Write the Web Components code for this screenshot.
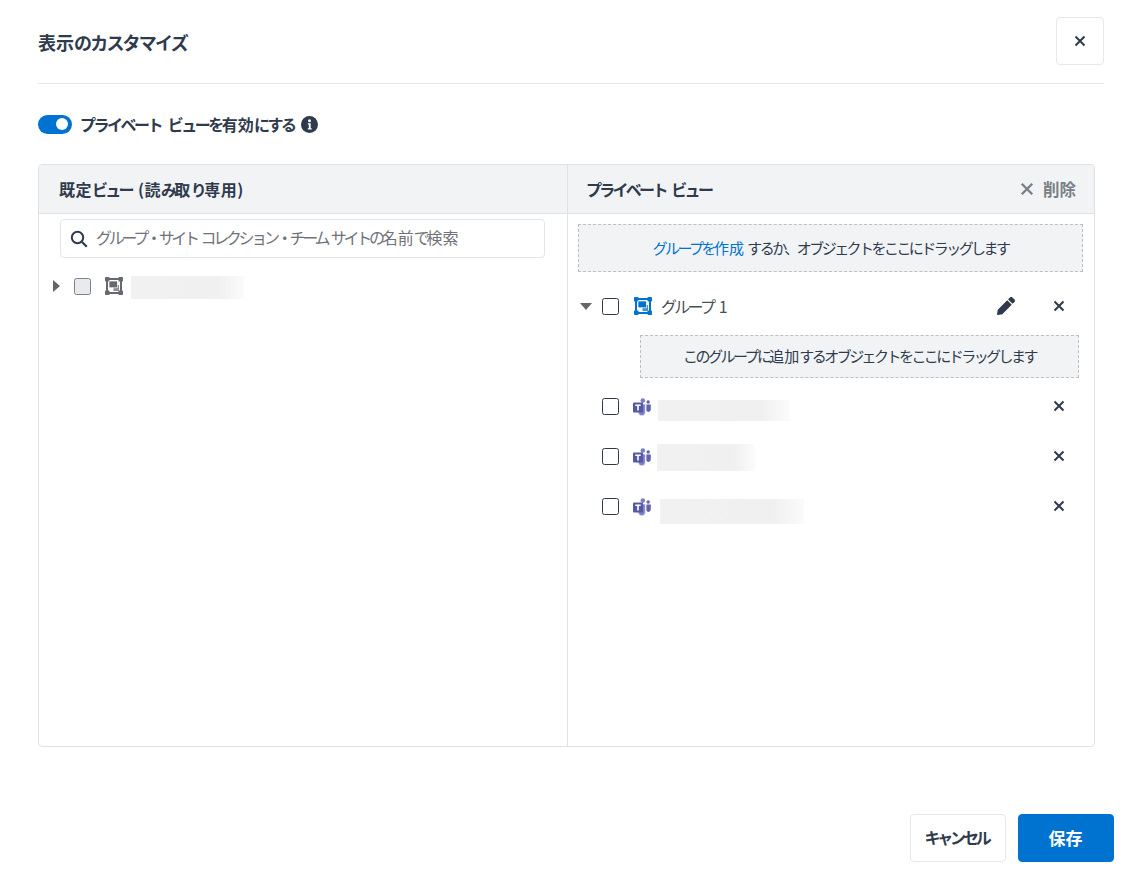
<!DOCTYPE html>
<html lang="ja">
<head>
<meta charset="utf-8">
<title>表示のカスタマイズ</title>
<style>
    html, body { margin: 0; background: #fff; }
    body {
        font-family: "Noto Sans CJK JP", "Noto Sans", sans-serif;
        color: #2f3b4c;
    }
    /* kana in the reference are proportional, so squeeze those runs only */
    .k { letter-spacing: -.17em; }
</style>
</head>
<body>
<customize-dialog heading="表示のカスタマイズ">
    <view-toggle slot="toggle" label="プライベート ビューを有効にする"></view-toggle>

    <view-pane slot="left" heading="既定ビュー (読み取り専用)" class="left">
        <search-box placeholder="グループ・サイト コレクション・チーム サイトの名前で検索"></search-box>
        <tree-row kind="left" caret="right" disabled icon="group-grey" blur="113,23,0,1"></tree-row>
    </view-pane>

    <view-pane slot="right" heading="プライベート ビュー" action="削除">
        <drop-zone main><a>グループを作成</a> するか、オブジェクトをここにドラッグします</drop-zone>
        <tree-row caret="down" icon="group-blue" label="グループ 1" edit remove></tree-row>
        <drop-zone nested>このグループに追加するオブジェクトをここにドラッグします</drop-zone>
        <tree-row kind="team" icon="teams" blur="132,21,0,4.5" remove></tree-row>
        <tree-row kind="team" icon="teams" blur="98,27,-1,1.5" remove></tree-row>
        <tree-row kind="team" icon="teams" blur="144,25,2,5.5" remove></tree-row>
    </view-pane>

    <dialog-button slot="footer">キャンセル</dialog-button>
    <dialog-button slot="footer" primary>保存</dialog-button>
</customize-dialog>

<script>
const KANA_CSS = `.k { letter-spacing: var(--k, -.17em); }`;
const kana = (text) => text.replace(/[ぁ-ゖァ-ヶー・、]+/g, (run) => `<span class="k">${run}</span>`);

const ICONS = {
    close: `<svg viewBox="0 0 12 12" width="12" height="12"><path d="M1.5 1.5l9 9M10.5 1.5l-9 9" stroke="currentColor" stroke-width="2" fill="none"/></svg>`,
    pencil: `<svg viewBox="0 0 512 512" width="18" height="18"><path fill="currentColor" d="M497.9 142.1l-46.1 46.1c-4.7 4.7-12.3 4.7-17 0l-111-111c-4.7-4.7-4.7-12.3 0-17l46.1-46.1c18.7-18.7 49.1-18.7 67.9 0l60.1 60.1c18.8 18.7 18.8 49.1 0 67.9zM284.2 99.8L21.6 362.4.4 483.9c-2.9 16.4 11.4 30.6 27.8 27.8l121.5-21.3 262.6-262.6c4.7-4.7 4.7-12.3 0-17l-111-111c-4.8-4.7-12.4-4.7-17.1 0z"/></svg>`,
    search: `<svg viewBox="0 0 18 18" width="18" height="18"><circle cx="7.5" cy="7.5" r="5.7" stroke="currentColor" stroke-width="2" fill="none"/><path d="M11.8 11.8l5 5" stroke="currentColor" stroke-width="2.2" fill="none"/></svg>`,
    info: `<svg viewBox="0 0 17 17" width="17" height="17"><circle cx="8.5" cy="8.5" r="8.5" fill="currentColor"/><circle cx="8.5" cy="4.8" r="1.5" fill="#fff"/><path d="M6.8 7.2h2.9v5h1v1.3H6.8v-1.3h1v-3.7h-1z" fill="#fff"/></svg>`,
    teams: `<svg viewBox="0 0 18 18" width="18" height="18">
        <circle cx="9.8" cy="2.6" r="2.3" fill="#7b7fc4"/><circle cx="15.2" cy="4" r="1.7" fill="#6264a7"/>
        <path d="M13.4 6.400h4.400v5.200a2.400 2.400 0 0 1-4.400 1.200z" fill="#6264a7"/>
        <path d="M5 6h7.300v8a3.500 3.500 0 0 1-7 .5z" fill="#7b7fc4" stroke="#fff" stroke-width=".6"/>
        <rect x="0" y="4.400" width="10" height="10" rx="1" fill="#5558a5"/>
        <path d="M2.300 6.600h5.400v1.500H5.800v4.400H4.200V8.100H2.300z" fill="#fff"/>
    </svg>`,
};

function groupIcon(colour, inner) {
    return `<svg viewBox="0 0 18 18" width="18" height="18">
        <rect x="2" y="2" width="14" height="14" fill="none" stroke="${colour}" stroke-width="2"/>
        <rect x="0" y="0" width="4.500" height="4.500" rx=".8" fill="${colour}"/><rect x="13.500" y="0" width="4.500" height="4.500" rx=".8" fill="${colour}"/>
        <rect x="0" y="13.500" width="4.500" height="4.500" rx=".8" fill="${colour}"/><rect x="13.500" y="13.500" width="4.500" height="4.500" rx=".8" fill="${colour}"/>
        <rect x="8.500" y="8" width="5.500" height="6" fill="${inner}"/>
        <rect x="4" y="4" width="8.500" height="6.800" fill="${colour}" stroke="#fff" stroke-width=".7"/>
    </svg>`;
}
ICONS["group-blue"] = groupIcon("#0072d0", "#3d94dc");
ICONS["group-grey"] = groupIcon("#66696e", "#8b8e92");

class CustomizeDialog extends HTMLElement {
    constructor() {
        super();
        const shadow = this.attachShadow({ mode: "open" });
        shadow.innerHTML = `
            <style>
                ${KANA_CSS}
                :host { display: block; width: 1136px; height: 875px; box-sizing: border-box; position: relative; }
                header {
                    display: flex; align-items: center; justify-content: space-between;
                    margin: 0 32px 0 38px; padding: 17px 0 18px; height: 84px; box-sizing: border-box;
                    border-bottom: 1px solid #e6e8ea;
                }
                h1 { margin: 2px 0 0; font-size: 18px; font-weight: 700; color: #2f3b4c; --k: -.1em; }
                button {
                    all: unset; width: 48px; height: 48px; box-sizing: border-box; border: 1px solid #e6e8ea;
                    border-radius: 4px; display: flex; align-items: center; justify-content: center; color: #2f3b4c;
                }
                .toggle { margin: 30px 0 0 38px; height: 20px; display: flex; align-items: center; }
                .panes {
                    display: grid; grid-template-columns: 529px 1fr; margin: 30px 41px 0 38px; height: 583px;
                    box-sizing: border-box; border: 1px solid #dfe2e5; border-radius: 4px; overflow: hidden;
                }
                footer { display: flex; justify-content: flex-end; gap: 12px; margin: 67px 22px 0 0; }
            </style>
            <header><h1>${kana(this.getAttribute("heading"))}</h1><button aria-label="閉じる">${ICONS.close}</button></header>
            <div class="toggle"><slot name="toggle"></slot></div>
            <div class="panes"><slot name="left"></slot><slot name="right"></slot></div>
            <footer><slot name="footer"></slot></footer>`;
    }
}

class ViewToggle extends HTMLElement {
    constructor() {
        super();
        const shadow = this.attachShadow({ mode: "open" });
        shadow.innerHTML = `
            <style>
                ${KANA_CSS}
                :host { display: flex; align-items: center; --k: -.155em; }
                .track { width: 34px; height: 19px; border-radius: 10px; background: #0072d0; position: relative; }
                .knob { position: absolute; right: 4px; top: 3.500px; width: 12px; height: 12px; border-radius: 50%; background: #fff; }
                .label { margin-left: 8px; font-size: 16px; font-weight: 700; word-spacing: 3px; color: #2f3b4c; }
                .info { margin-left: 6px; display: flex; color: #2f3b4c; }
            </style>
            <div class="track"><div class="knob"></div></div>
            <span class="label">${kana(this.getAttribute("label"))}</span>
            <span class="info">${ICONS.info}</span>`;
    }
}

class ViewPane extends HTMLElement {
    constructor() {
        super();
        const shadow = this.attachShadow({ mode: "open" });
        const action = this.getAttribute("action");
        shadow.innerHTML = `
            <style>
                ${KANA_CSS}
                :host { display: block; height: 100%; box-sizing: border-box; }
                :host(.left) { border-right: 1px solid #dfe2e5; }
                .head {
                    height: 49px; box-sizing: border-box; background: #f1f3f5; border-bottom: 1px solid #dfe2e5;
                    display: flex; align-items: center; justify-content: space-between; padding: 0 18px 0 18px;
                }
                :host(.left) .head { padding-left: 20px; }
                h2 { margin: 0; font-size: 16px; font-weight: 700; word-spacing: 2px; color: #2f3b4c; }
                :host(.left) h2 { letter-spacing: .5px; }
                .action { display: flex; align-items: center; gap: 9px; font-size: 16.5px; font-weight: 700; color: #7a7f85; }
                .action svg { width: 14px; height: 14px; display: block; }
            </style>
            <div class="head"><h2>${kana(this.getAttribute("heading"))}</h2>${action ? `<span class="action">${ICONS.close}<span>${action}</span></span>` : ""}</div>
            <slot></slot>`;
    }
}

class SearchBox extends HTMLElement {
    constructor() {
        super();
        const shadow = this.attachShadow({ mode: "open" });
        shadow.innerHTML = `
            <style>
                ${KANA_CSS}
                :host {
                    display: flex; align-items: center; margin: 5px 22px 0 21px; height: 39px; box-sizing: border-box;
                    border: 1px solid #e3e5e8; border-radius: 4px; padding-left: 9px; --k: -.205em;
                }
                .icon { display: flex; color: #2f3b4c; }
                span.text { margin: 0 0 3px 8px; font-size: 16px; color: #6f747a; white-space: nowrap; }
            </style>
            <div class="icon">${ICONS.search}</div><span class="text">${kana(this.getAttribute("placeholder"))}</span>`;
    }
}

class TreeRow extends HTMLElement {
    constructor() {
        super();
        const shadow = this.attachShadow({ mode: "open" });
        const caret = this.getAttribute("caret");
        const kind = this.getAttribute("kind") || "group";
        const disabled = this.hasAttribute("disabled");
        const label = this.getAttribute("label");
        const [bw, bh, bx, by] = (this.getAttribute("blur") || "").split(",");
        const caretSvg = caret === "down"
            ? `<svg viewBox="0 0 12 7" width="12" height="7"><path d="M0 0h12L6 7z" fill="#62666b"/></svg>`
            : `<svg viewBox="0 0 7 12" width="7" height="12"><path d="M0 0l7 6-7 6z" fill="#62666b"/></svg>`;
        shadow.innerHTML = `
            <style>
                ${KANA_CSS}
                :host { display: flex; align-items: center; height: 50px; position: relative; padding-left: 12px; }
                :host([kind="left"]) { padding-left: 14px; margin-top: 3px; }
                :host([kind="team"]) { padding-left: 34px; }
                .caret { width: 12px; display: flex; justify-content: center; margin-right: 10px; }
                :host([kind="left"]) .caret { width: 7px; margin-right: 14px; }
                .check {
                    width: 17px; height: 17px; box-sizing: border-box; border: 1.500px solid #2f3b4c; border-radius: 2.500px; flex: none;
                }
                .check.off { background: #e8eaed; border-color: #7d8287; }
                .icon { display: flex; margin-left: 15px; margin-right: 9px; }
                :host([kind="left"]) .icon { margin-left: 14px; margin-right: 8px; }
                :host([kind="team"]) .icon { margin-left: 14px; margin-right: 0; position: relative; top: 1px; }
                .label { font-size: 16px; word-spacing: 2px; color: #4a4f55; white-space: nowrap; }
                .blur {
                    height: ${bh}px; width: ${bw}px; margin-left: ${bx || 0}px; flex: none;
                    background: linear-gradient(to right, #f1f1f2 0%, #f0f0f1 78%, #fbfbfb 100%);
                    position: relative; top: ${by || 0}px;
                }
                :host([kind="team"]) .blur { margin-left: calc(7px + ${bx || 0}px); }
                .actions { margin-left: auto; display: flex; align-items: center; color: #2f3b4c; }
                .edit { display: flex; margin-right: 38px; }
                .remove { display: flex; margin-right: 29px; width: 12px; }
            </style>
            ${caret ? `<span class="caret">${caretSvg}</span>` : ""}
            <span class="check ${disabled ? "off" : ""}"></span>
            <span class="icon">${ICONS[this.getAttribute("icon")]}</span>
            ${label ? `<span class="label">${kana(label)}</span>` : ""}
            ${bw ? `<span class="blur"></span>` : ""}
            ${kind === "left" ? "" : `<span class="actions">
                ${this.hasAttribute("edit") ? `<span class="edit">${ICONS.pencil}</span>` : ""}
                ${this.hasAttribute("remove") ? `<span class="remove">${ICONS.close}</span>` : ""}
            </span>`}`;
    }
}

class DropZone extends HTMLElement {
    constructor() {
        super();
        const shadow = this.attachShadow({ mode: "open" });
        shadow.innerHTML = `
            <style>
                :host {
                    display: flex; align-items: center; justify-content: center; box-sizing: border-box;
                    background: #f1f3f5; border: 1px dashed #bcc0c5; font-size: 15px; color: #2f3b4c;
                    white-space: pre; padding-bottom: 2px;
                }
                :host([main]) { height: 48px; margin: 10px 11px 9px 10px; }
                :host([nested]) { height: 43px; margin: 4px 15px 3px 72px; }
                ::slotted(a) { color: #0072d0; }
            </style>
            <div><slot></slot></div>`;
    }
    connectedCallback() {
        this.innerHTML = kana(this.innerHTML);
    }
}

class DialogButton extends HTMLElement {
    constructor() {
        super();
        const shadow = this.attachShadow({ mode: "open" });
        shadow.innerHTML = `
            <style>
                :host {
                    display: flex; align-items: center; justify-content: center; width: 96px; height: 48px;
                    box-sizing: border-box; border: 1px solid #e6e8ea; border-radius: 4px; padding: 0 3px 2px 0;
                    font-size: 16px; font-weight: 700; color: #2f3b4c; background: #fff;
                }
                :host([primary]) { background: #0072d0; border-color: #0072d0; color: #fff; font-size: 17px; padding-right: 1px; }
            </style>
            <div><slot></slot></div>`;
    }
    connectedCallback() {
        this.innerHTML = kana(this.innerHTML).replace('class="k"', 'class="k" style="letter-spacing:-.2em"');
    }
}

customElements.define("customize-dialog", CustomizeDialog);
customElements.define("view-toggle", ViewToggle);
customElements.define("view-pane", ViewPane);
customElements.define("search-box", SearchBox);
customElements.define("tree-row", TreeRow);
customElements.define("drop-zone", DropZone);
customElements.define("dialog-button", DialogButton);
</script>
</body>
</html>
